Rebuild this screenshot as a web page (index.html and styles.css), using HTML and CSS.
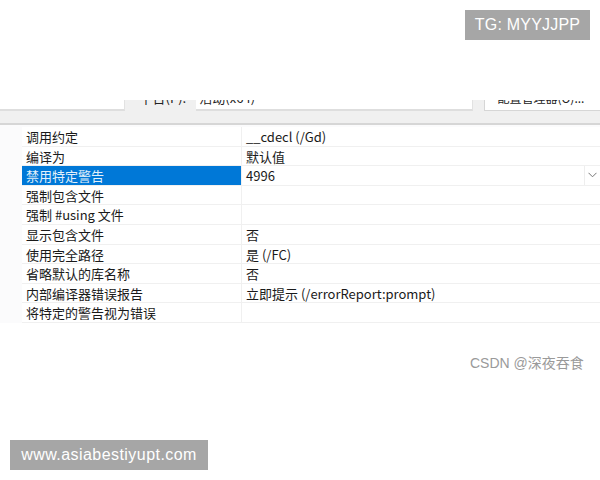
FILE: index.html
```html
<!DOCTYPE html>
<html lang="zh">
<head>
<meta charset="utf-8">
<link rel="stylesheet" href="styles.css">
</head>
<body>
<div class="page">
  <div class="top"></div>
  <div class="toolbar">
    <div class="tb-box tb-left"></div>
    <div class="tb-label"><span>平台(P):</span></div>
    <div class="tb-box tb-input"><span>活动(x64)</span></div>
    <div class="tb-box tb-button"><span>配置管理器(O)...</span></div>
  </div>
  <div class="grid">
    <div class="row"><div class="name">调用约定</div><div class="value">__cdecl (/Gd)</div></div>
    <div class="row"><div class="name">编译为</div><div class="value">默认值</div></div>
    <div class="row sel"><div class="name">禁用特定警告</div><div class="value">4996<span class="drop"><svg width="9" height="6" viewBox="0 0 9 6"><path d="M0.5 0.8 L4.5 4.8 L8.5 0.8" fill="none" stroke="#777" stroke-width="1"/></svg></span></div></div>
    <div class="row"><div class="name">强制包含文件</div><div class="value"></div></div>
    <div class="row"><div class="name">强制 #using 文件</div><div class="value"></div></div>
    <div class="row"><div class="name">显示包含文件</div><div class="value">否</div></div>
    <div class="row"><div class="name">使用完全路径</div><div class="value">是 (/FC)</div></div>
    <div class="row"><div class="name">省略默认的库名称</div><div class="value">否</div></div>
    <div class="row"><div class="name">内部编译器错误报告</div><div class="value">立即提示 (/errorReport:prompt)</div></div>
    <div class="row"><div class="name">将特定的警告视为错误</div><div class="value"></div></div>
  </div>
  <div class="wm wm-tg">TG: MYYJJPP</div>
  <div class="wm-csdn">CSDN @深夜吞食</div>
  <div class="wm wm-url">www.asiabestiyupt.com</div>
</div>
</body>
</html>
```
FILE: styles.css
```css
html, body {
  margin: 0;
  padding: 0;
  background: #ffffff;
}
.page {
  position: relative;
  width: 600px;
  height: 480px;
  overflow: hidden;
  font-family: "Noto Sans CJK SC", "Noto Sans", sans-serif;
  color: #1a1a1a;
}
.top {
  height: 100px;
  background: #ffffff;
}
.toolbar {
  height: 23px;
  background: #f0f0f0;
  border-bottom: 2px solid #d6d6d6;
  display: flex;
  align-items: flex-start;
  overflow: hidden;
  font-size: 13px;
}
.tb-box {
  background: #ffffff;
  border-bottom: 2px solid #dedede;
  height: 9px;
  overflow: hidden;
}
.tb-box span, .tb-label span {
  display: block;
  line-height: 16px;
  margin-top: -10px;
  color: #222;
  white-space: nowrap;
}
.tb-left {
  width: 124px;
  border-right: 1px solid #e2e2e2;
}
.tb-label {
  margin-left: 15px;
  width: 57px;
  height: 6px;
  overflow: hidden;
}
.tb-input {
  width: 274px;
  padding-left: 3px;
  border-right: 1px solid #e2e2e2;
}
.tb-button {
  margin-left: 11px;
  width: 103px;
  height: 10px;
  padding-left: 12px;
  border-left: 1px solid #d6d6d6;
  border-bottom: 1px solid #d6d6d6;
  font-size: 12px;
}
.grid {
  display: flex;
  flex-direction: column;
  padding-left: 22px;
  padding-top: 2px;
  background: #fbfbfc;
}
.row {
  display: flex;
  height: 18.6px;
  border-bottom: 1px solid #f0f0f0;
  font-size: 13px;
  line-height: 19px;
  background: #ffffff;
}
.name {
  width: 215px;
  padding-left: 4px;
  border-right: 1px solid #f0f0f0;
  white-space: nowrap;
}
.value {
  flex: 1;
  padding-left: 4px;
  display: flex;
  white-space: nowrap;
}
.sel .name {
  background: #0078d7;
  color: #e3f0fa;
}
.drop {
  margin-left: auto;
  width: 15px;
  border-left: 1px solid #eeeeee;
  display: flex;
  align-items: center;
  justify-content: center;
}
.wm {
  position: absolute;
  background: #a6a6a6;
  color: #ffffff;
  font-family: "Liberation Sans", Arial, sans-serif;
  display: flex;
  align-items: center;
  justify-content: center;
}
.wm-tg {
  left: 465px;
  top: 10px;
  width: 125px;
  height: 30px;
  font-size: 16px;
  letter-spacing: 0.2px;
}
.wm-url {
  left: 10px;
  top: 440px;
  width: 198px;
  height: 30px;
  font-size: 16px;
  letter-spacing: 0.45px;
}
.wm-csdn {
  position: absolute;
  left: 470px;
  top: 352px;
  font-size: 14px;
  color: #9a9a9a;
  font-family: "Liberation Sans", "Noto Sans CJK SC", sans-serif;
}
```
